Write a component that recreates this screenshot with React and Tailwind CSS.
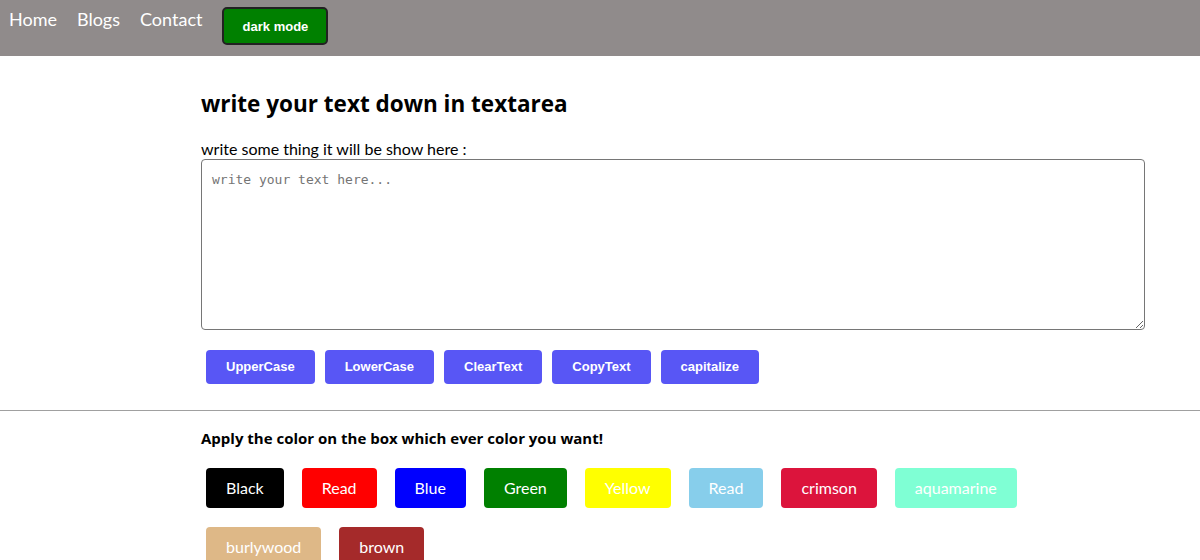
import React from "react";

const actions = ["UpperCase", "LowerCase", "ClearText", "CopyText", "capitalize"];
const colors = [
  { label: "Black", cls: "bg-[#000000]" },
  { label: "Read", cls: "bg-[#ff0000]" },
  { label: "Blue", cls: "bg-[#0000ff]" },
  { label: "Green", cls: "bg-[#008000]" },
  { label: "Yellow", cls: "bg-[#ffff00]" },
  { label: "Read", cls: "bg-[#87ceeb]" },
  { label: "crimson", cls: "bg-[#dc143c]" },
  { label: "aquamarine", cls: "bg-[#7fffd4]" },
  { label: "burlywood", cls: "bg-[#deb887]" },
  { label: "brown", cls: "bg-[#a52a2a]" },
];

export default function App() {
  return (
    <div className="w-[1200px] h-[560px] overflow-hidden bg-white font-['Lato','Liberation_Sans',sans-serif] text-black">
      <nav className="h-[56px] bg-[#908b8b] flex items-start pl-[9px]">
        <div className="flex gap-[20px] pt-[7px] text-[18px] text-white leading-[24px]">
          <span>Home</span>
          <span>Blogs</span>
          <span>Contact</span>
        </div>
        <button className="ml-[20px] mt-[7px] w-[106px] h-[38px] pt-[1px] bg-[#008000] border-2 border-[#222] rounded-[5px] text-white text-[13px] font-bold font-['Liberation_Sans',Arial,sans-serif]">
          dark mode
        </button>
      </nav>

      <div className="pl-[201px] w-[1145px]">
        <h2 className="pt-[33px] text-[22.5px] font-bold leading-[30px] font-['Open_Sans','Lato',sans-serif]">write your text down in textarea</h2>
        <div className="mt-[20px] text-[16px] leading-[20px]">write some thing it will be show here :</div>
        <textarea
          className="block w-[944px] h-[171px] border border-[#767676] rounded-[4px] px-[10px] py-[10px] text-[13px] font-['DejaVu_Sans_Mono','Liberation_Mono',monospace] placeholder:text-[#757575] resize-y"
          placeholder="write your text here..."
        />
        <div className="flex gap-[10px] pl-[5px] mt-[20px]">
          {actions.map((a) => (
            <button
              key={a}
              className="h-[34px] px-[20px] rounded-[4px] bg-[#5856f5] text-white text-[13px] font-bold font-['Liberation_Sans',Arial,sans-serif]"
            >
              {a}
            </button>
          ))}
        </div>
      </div>

      <div className="mt-[26px] border-t border-[#a0a0a0]" />

      <div className="pl-[201px] w-[1145px]">
        <div className="mt-[17px] text-[15px] font-bold leading-[20px] font-['Open_Sans','Lato',sans-serif]">
          Apply the color on the box which ever color you want!
        </div>
        <div className="flex flex-wrap gap-x-[18px] gap-y-[19px] pl-[5px] mt-[20px] w-[900px]">
          {colors.map((c, i) => (
            <div
              key={i}
              className={`h-[40px] px-[20px] rounded-[4px] flex items-center justify-center text-white text-[16px] ${c.cls}`}
            >
              {c.label}
            </div>
          ))}
        </div>
      </div>
    </div>
  );
}
